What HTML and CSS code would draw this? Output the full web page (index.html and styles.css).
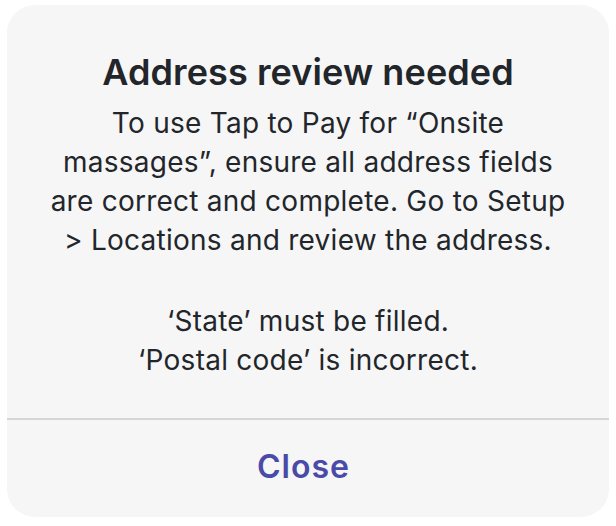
FILE: index.html
```html
<!DOCTYPE html>
<html>
<head>
<meta charset="utf-8">
<link rel="stylesheet" href="styles.css">
</head>
<body>
<div class="alert">
  <div class="content">
    <h1 class="title">Address review needed</h1>
    <p class="message">To use Tap to Pay for “Onsite massages”, ensure all address fields are correct and complete. Go to Setup &gt; Locations and review the address.</p>
    <p class="message errors">‘State’ must be filled.<br>‘Postal code’ is incorrect.</p>
  </div>
  <div class="actions">
    <button class="action">Close</button>
  </div>
</div>
</body>
</html>
```
FILE: styles.css
```css
html, body {
  margin: 0;
  background: #ffffff;
}
body {
  padding: 5px 7px 9px 7px;
  font-family: Inter, "Noto Sans", sans-serif;
  color: #22262b;
}
.alert {
  width: 602px;
  height: 512px;
  background: #f6f6f6;
  border-radius: 28px;
  display: flex;
  flex-direction: column;
  overflow: hidden;
}
.content {
  flex: 1;
  display: flex;
  flex-direction: column;
  align-items: center;
  padding: 44px 36px 0 36px;
  text-align: center;
}
.title {
  margin: 0;
  font-size: 36px;
  font-weight: 600;
  line-height: 46px;
  letter-spacing: 0.1px;
}
.message {
  margin: 9px 0 0 0;
  font-size: 28px;
  line-height: 39px;
  font-weight: 400;
  letter-spacing: 0.25px;
}
.errors {
  margin-top: 42px;
}
.actions {
  border-top: 2px solid #d6d6d6;
  height: 97px;
  display: flex;
}
.action {
  flex: 1;
  border: 0;
  background: transparent;
  font-family: Inter, sans-serif;
  font-size: 32px;
  font-weight: 600;
  letter-spacing: 1px;
  color: #4a4aa8;
  padding: 0 9px 4px 0;
}
```
